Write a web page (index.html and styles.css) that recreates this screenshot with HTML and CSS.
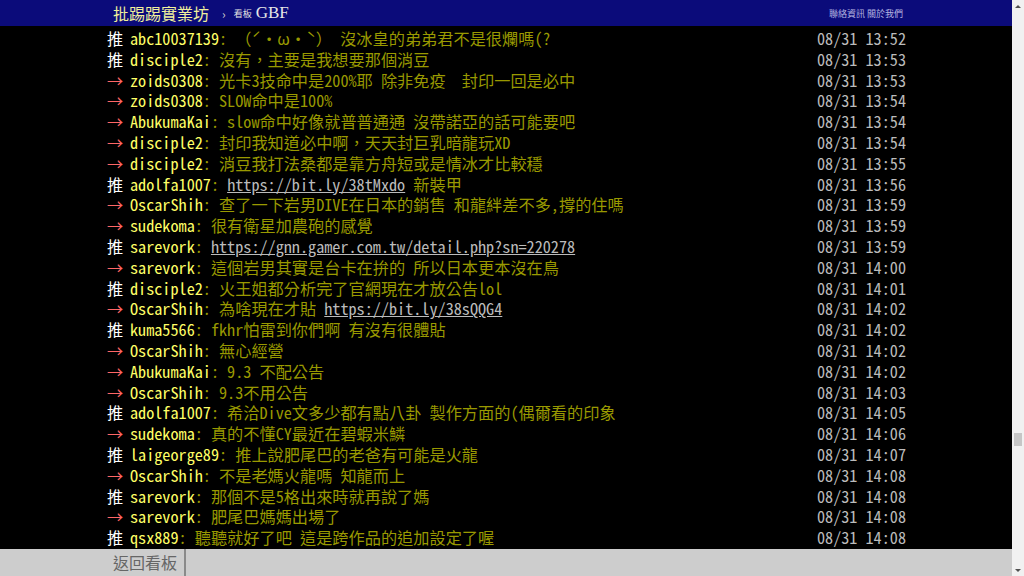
FILE: index.html
```html
<!DOCTYPE html>
<html lang="zh-Hant">
<head>
<meta charset="utf-8">
<title>GBF - 批踢踢實業坊</title>
<link rel="stylesheet" href="styles.css">
</head>
<body>
<div class="page">
  <div class="main">
    <div class="topbar">
      <div class="topin">
        <span class="logo">批踢踢實業坊</span>
        <span class="sep">›</span>
        <span class="bl">看板</span>
        <span class="board">GBF</span>
        <span class="right">聯絡資訊 關於我們</span>
      </div>
    </div>
    <div class="screen">
      <div class="push"><span class="tag w">推</span><span class="uid">abc10037139</span><span class="c">: （ˊ・ω・ˋ） 沒冰皇的弟弟君不是很爛嗎(?</span><span class="dt">08/31 13:52</span></div>
      <div class="push"><span class="tag w">推</span><span class="uid">disciple2</span><span class="c">: 沒有，主要是我想要那個消豆</span><span class="dt">08/31 13:53</span></div>
      <div class="push"><span class="tag r">→</span><span class="uid">zoids0308</span><span class="c">: 光卡3技命中是200%耶 除非免疫  封印一回是必中</span><span class="dt">08/31 13:53</span></div>
      <div class="push"><span class="tag r">→</span><span class="uid">zoids0308</span><span class="c">: SLOW命中是100%</span><span class="dt">08/31 13:54</span></div>
      <div class="push"><span class="tag r">→</span><span class="uid">AbukumaKai</span><span class="c">: slow命中好像就普普通通 沒帶諾亞的話可能要吧</span><span class="dt">08/31 13:54</span></div>
      <div class="push"><span class="tag r">→</span><span class="uid">disciple2</span><span class="c">: 封印我知道必中啊，天天封巨乳暗龍玩XD</span><span class="dt">08/31 13:54</span></div>
      <div class="push"><span class="tag r">→</span><span class="uid">disciple2</span><span class="c">: 消豆我打法桑都是靠方舟短或是情冰才比較穩</span><span class="dt">08/31 13:55</span></div>
      <div class="push"><span class="tag w">推</span><span class="uid">adolfa1007</span><span class="c">: <span class="link">https://bit.ly/38tMxdo</span> 新裝甲</span><span class="dt">08/31 13:56</span></div>
      <div class="push"><span class="tag r">→</span><span class="uid">OscarShih</span><span class="c">: 查了一下岩男DIVE在日本的銷售 和龍絆差不多,撐的住嗎</span><span class="dt">08/31 13:59</span></div>
      <div class="push"><span class="tag r">→</span><span class="uid">sudekoma</span><span class="c">: 很有衛星加農砲的感覺</span><span class="dt">08/31 13:59</span></div>
      <div class="push"><span class="tag w">推</span><span class="uid">sarevork</span><span class="c">: <span class="link">https://gnn.gamer.com.tw/detail.php?sn=220278</span></span><span class="dt">08/31 13:59</span></div>
      <div class="push"><span class="tag r">→</span><span class="uid">sarevork</span><span class="c">: 這個岩男其實是台卡在拚的 所以日本更本沒在鳥</span><span class="dt">08/31 14:00</span></div>
      <div class="push"><span class="tag w">推</span><span class="uid">disciple2</span><span class="c">: 火王姐都分析完了官網現在才放公告lol</span><span class="dt">08/31 14:01</span></div>
      <div class="push"><span class="tag r">→</span><span class="uid">OscarShih</span><span class="c">: 為啥現在才貼 <span class="link">https://bit.ly/38sQQG4</span></span><span class="dt">08/31 14:02</span></div>
      <div class="push"><span class="tag w">推</span><span class="uid">kuma5566</span><span class="c">: fkhr怕雷到你們啊 有沒有很體貼</span><span class="dt">08/31 14:02</span></div>
      <div class="push"><span class="tag r">→</span><span class="uid">OscarShih</span><span class="c">: 無心經營</span><span class="dt">08/31 14:02</span></div>
      <div class="push"><span class="tag r">→</span><span class="uid">AbukumaKai</span><span class="c">: 9.3 不配公告</span><span class="dt">08/31 14:02</span></div>
      <div class="push"><span class="tag r">→</span><span class="uid">OscarShih</span><span class="c">: 9.3不用公告</span><span class="dt">08/31 14:03</span></div>
      <div class="push"><span class="tag w">推</span><span class="uid">adolfa1007</span><span class="c">: 希洽Dive文多少都有點八卦 製作方面的(偶爾看的印象</span><span class="dt">08/31 14:05</span></div>
      <div class="push"><span class="tag r">→</span><span class="uid">sudekoma</span><span class="c">: 真的不懂CY最近在碧蝦米鱗</span><span class="dt">08/31 14:06</span></div>
      <div class="push"><span class="tag w">推</span><span class="uid">laigeorge89</span><span class="c">: 推上說肥尾巴的老爸有可能是火龍</span><span class="dt">08/31 14:07</span></div>
      <div class="push"><span class="tag r">→</span><span class="uid">OscarShih</span><span class="c">: 不是老媽火龍嗎 知龍而上</span><span class="dt">08/31 14:08</span></div>
      <div class="push"><span class="tag w">推</span><span class="uid">sarevork</span><span class="c">: 那個不是5格出來時就再說了媽</span><span class="dt">08/31 14:08</span></div>
      <div class="push"><span class="tag r">→</span><span class="uid">sarevork</span><span class="c">: 肥尾巴媽媽出場了</span><span class="dt">08/31 14:08</span></div>
      <div class="push"><span class="tag w">推</span><span class="uid">qsx889</span><span class="c">: 聽聽就好了吧 這是跨作品的追加設定了喔</span><span class="dt">08/31 14:08</span></div>
    </div>
    <div class="bottombar">
      <div class="botin"><span class="back">返回看板</span></div>
    </div>
  </div>
  <div class="scrollbar">
    <div class="sb-btn"><span class="arrow-up"></span></div>
    <div class="sb-track"><div class="sb-thumb"></div></div>
    <div class="sb-btn"><span class="arrow-down"></span></div>
  </div>
</div>
</body>
</html>
```
FILE: styles.css
```css
html, body {
  margin: 0;
  padding: 0;
  height: 100%;
  overflow: hidden;
  background: #000;
}

.page {
  display: flex;
  width: 1024px;
  height: 576px;
}

.main {
  flex: 1;
  min-width: 0;
  display: flex;
  flex-direction: column;
  background: #000;
}

.topbar {
  flex: none;
  height: 26px;
  background: #0b0b7a;
}

.topin {
  width: 800px;
  height: 26px;
  margin: 0 auto;
  padding: 0 3px 0 7px;
  box-sizing: border-box;
  display: flex;
  align-items: center;
  font-family: "Noto Sans CJK TC", sans-serif;
}

.logo {
  font-size: 16px;
  line-height: 26px;
  color: #f0f09c;
}

.sep {
  font-size: 12px;
  color: #cfcfcf;
  margin-left: 13px;
}

.bl {
  font-size: 9px;
  color: #e0e0e0;
  margin-left: 8px;
}

.board {
  font-family: "Liberation Serif", serif;
  font-size: 17px;
  color: #e6e6e6;
  margin-left: 4px;
}

.right {
  margin-left: auto;
  font-size: 9px;
  color: #b4b4e0;
}

.screen {
  flex: 1;
  padding-top: 2px;
  overflow: hidden;
}

.push {
  width: 800px;
  margin: 0 auto;
  padding-left: 1px;
  box-sizing: border-box;
  display: flex;
  height: 20.8px;
  line-height: 20.8px;
  white-space: pre;
  font-family: "Noto Sans Mono CJK TC", "Noto Sans CJK TC", monospace;
  font-size: 16.2px;
}

.tag {
  flex: none;
  width: 23px;
}

.tag.w { color: #fff; }
.tag.r { color: #f66; }

.uid { color: #ff6; }

.c { color: #990; }

.link {
  color: #bbb;
  text-decoration: underline;
}

.dt {
  margin-left: auto;
  color: #bbb;
}

.bottombar {
  flex: none;
  height: 27px;
  background: #cdcdcd;
}

.botin {
  width: 800px;
  height: 27px;
  margin: 0 auto;
  display: flex;
}

.back {
  padding: 0 7px;
  border-right: 2px solid #8a8a8a;
  font-family: "Noto Sans CJK TC", sans-serif;
  font-size: 16px;
  line-height: 27px;
  color: #666;
}

.scrollbar {
  flex: none;
  width: 12px;
  background: #f1f1f1;
  display: flex;
  flex-direction: column;
}

.sb-btn {
  flex: none;
  height: 12px;
  display: flex;
  align-items: center;
  justify-content: center;
}

.arrow-up {
  width: 0;
  height: 0;
  border-left: 3px solid transparent;
  border-right: 3px solid transparent;
  border-bottom: 3px solid #505050;
}

.arrow-down {
  width: 0;
  height: 0;
  border-left: 3px solid transparent;
  border-right: 3px solid transparent;
  border-top: 3px solid #505050;
}

.sb-track {
  flex: 1;
  display: flex;
  flex-direction: column;
  align-items: center;
}

.sb-thumb {
  margin-top: 421px;
  width: 8px;
  height: 13px;
  background: #c6c6c6;
}
```
